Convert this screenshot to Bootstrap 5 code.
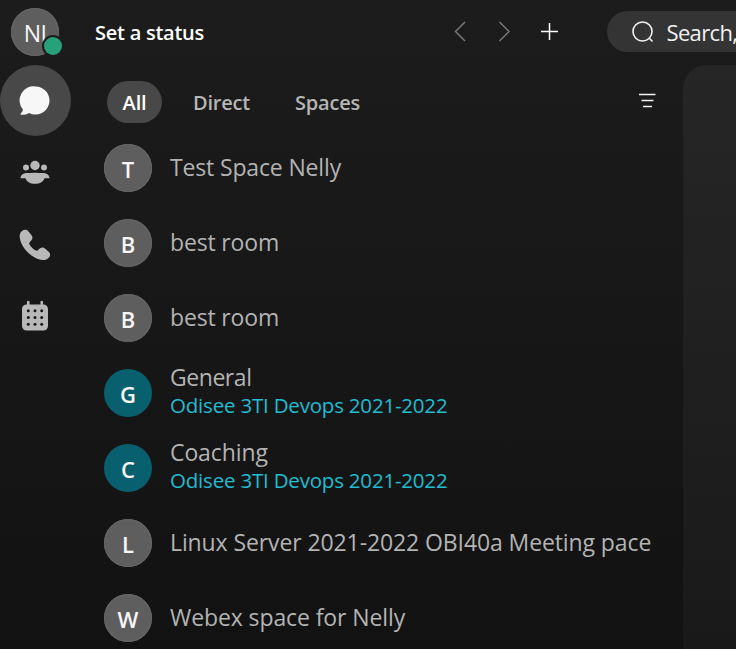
<!DOCTYPE html>
<html lang="en" data-bs-theme="dark">
<head>
<meta charset="utf-8">
<meta name="viewport" content="width=device-width, initial-scale=1">
<title>Messaging</title>
<link href="https://cdn.jsdelivr.net/npm/bootstrap@5.3.0/dist/css/bootstrap.min.css" rel="stylesheet">
<style>
body{width:736px;height:649px;font-family:"Open Sans","Noto Sans",sans-serif;background:linear-gradient(#1c1c1c,#121212);color:#b3b3b3;white-space:nowrap}
.topbar{height:66px;flex:none}
.topbar>*{flex:none}
.avatar{width:48px;height:48px;flex:none;background:#5e5e5e;color:#f7f7f7;box-shadow:inset 0 0 0 1px #666;font-size:22px;line-height:51px;font-weight:600;text-align:center}
.avatar.team{background:#08606e;box-shadow:none}
.me{margin:8px 0 0 11px;font-weight:500;line-height:50px;letter-spacing:-.6px;font-size:23px}
.presence{width:18px;height:18px;right:-3px;bottom:1px;background:#27a17a;box-shadow:0 0 0 2px #1c1c1c}
.status{margin:18px 0 0 36px;width:355px;font-size:20px;line-height:29px;font-weight:600;color:#fff;letter-spacing:-.25px}
.topbar .finder{margin:11px 0 0 -3px;width:129px;height:41px;background:#343434;color:#f2f2f2;font-size:22px;letter-spacing:-.65px;border-radius:21px 0 0 21px}
.search-label{padding-top:2px;margin-left:-.5px}
.rail{width:104px;flex:none;margin-top:-1px}
.rail a{width:71px;height:72px;color:#b8b8b8}
.rail a.active{background:#484848;color:#f7f7f7;height:71px}
.chats{width:579px;flex:none}
.tabs{height:73px;padding:15px 0 0 3px}
.tab{height:42px;line-height:44px;font-size:20px;font-weight:600;color:#b5b5b5;border-radius:21px;letter-spacing:-.2px}
.tab.active{background:#484848;color:#fff;width:55px;text-align:center}
.tab-direct{width:102px;margin-left:31px}
.tab-spaces{width:343px}
.room{height:75px;gap:18px;padding-top:5px}
.title{font-size:23px;line-height:30px;height:30px;letter-spacing:-.15px}
.long{letter-spacing:-.1px}
.two{margin-top:-7px}
.tight{letter-spacing:-.45px}
.sub{font-size:20.5px;line-height:26px;height:26px;color:#1fbdd2;letter-spacing:-.2px}
.pane{background:linear-gradient(#262626,#191919);border-radius:24px 0 0 0;margin-top:-1px}
</style>
</head>
<body class="overflow-hidden d-flex flex-column">
<header class="topbar d-flex align-items-start">
  <div class="avatar me rounded-circle position-relative">NI<span class="presence position-absolute rounded-circle"></span></div>
  <div class="status">Set a status</div>
  <svg width="160" height="64" fill="none" stroke="#777" stroke-width="1.5"><path d="M15 22 5.500 31.500 15 41M49.500 22 59 31.500 49.500 41"/><path d="M91 31.500h17M99.500 23v17" stroke="#fff"/></svg>
  <div class="finder d-flex align-items-center"><svg class="flex-shrink-0" width="60" height="41" fill="none" stroke="#f2f2f2" stroke-width="1.6"><circle cx="35.500" cy="20.500" r="9.500"/><path d="M42 27l3.500 3.500"/></svg><span class="search-label">Search,</span></div>
</header>
<main class="d-flex flex-grow-1">
  <nav class="rail d-flex flex-column" aria-label="Main">
    <a class="active rounded-circle" href="#" aria-label="Messages"><svg width="71" height="71" fill="currentColor"><path d="M35.500 21.500a14 14 0 1 1-6.500 26.400c-2.500 1.500-5 2-7.500 1.900-1 0-1.200-1-.6-1.600 1.300-1.200 2-2.300 2-3.700A14 14 0 0 1 35.500 21.500Z"/></svg></a>
    <a href="#" aria-label="Teams"><svg width="71" height="72" fill="currentColor"><circle cx="35" cy="29.500" r="4.700"/><circle cx="26" cy="31.500" r="3"/><circle cx="44" cy="31.500" r="3"/><path d="M27 37h3.500q4.500-.6 9 0H43c4 0 6.500 2.500 6.500 5.200H44.500c-1 3.500-4.500 5.500-9.500 5.500s-8.500-2-9.500-5.500H20.500c0-2.700 2.500-5.200 6.500-5.200Z"/></svg></a>
    <a href="#" aria-label="Calls"><svg width="71" height="72" fill="currentColor"><path transform="translate(0 .5)" d="M22 22.500c2-1.700 4.700-1.700 6.300.2l3.200 4c1.400 1.800 1.200 3.800-.3 5.400l-1.300 1.500c-.8 1-.8 1.700-.1 2.800 1.400 2.200 3.200 4 5.600 5.400 1 .6 1.900.5 2.700-.3l1.600-1.400c1.700-1.500 3.700-1.600 5.300-.2l3.700 3.300c1.900 1.700 1.900 4.200.1 6-2.600 2.700-6.700 2.900-11 1.200-8-3.200-14.500-9.900-17.300-17.900-1.400-4.200-1.200-7.800 1.500-10Z"/></svg></a>
    <a href="#" aria-label="Meetings"><svg width="71" height="72"><path fill="currentColor" d="M27 21h2.500v3.500h11V21H43v3.500h.5a4.500 4.500 0 0 1 4.500 4.500v17a4.500 4.500 0 0 1-4.500 4.500h-17A4.500 4.500 0 0 1 22 46V29a4.500 4.500 0 0 1 4.500-4.500h.5Z"/><g fill="#191919"><circle cx="28.300" cy="30.800" r="1.500"/><circle cx="35" cy="30.800" r="1.500"/><circle cx="41.700" cy="30.800" r="1.500"/><circle cx="28.300" cy="37.500" r="1.500"/><circle cx="35" cy="37.500" r="1.500"/><circle cx="41.700" cy="37.500" r="1.500"/><circle cx="28.300" cy="44.200" r="1.500"/><circle cx="35" cy="44.200" r="1.500"/><circle cx="41.700" cy="44.200" r="1.500"/></g></svg></a>
  </nav>
  <section class="chats">
    <div class="tabs d-flex">
      <div class="tab active">All</div>
      <div class="tab tab-direct">Direct</div>
      <div class="tab tab-spaces">Spaces</div>
      <svg width="18" height="43" stroke="#f2f2f2" stroke-width="1.500"><path d="M1 13.500h16.500M3.500 19.500h12M5 25.500h9"/></svg>
    </div>
    <div class="room d-flex"><div class="avatar rounded-circle">T</div><div class="pt-2"><div class="title">Test Space Nelly</div></div></div>
    <div class="room d-flex"><div class="avatar rounded-circle">B</div><div class="pt-2"><div class="title">best room</div></div></div>
    <div class="room d-flex"><div class="avatar rounded-circle">B</div><div class="pt-2"><div class="title">best room</div></div></div>
    <div class="room d-flex"><div class="avatar team rounded-circle">G</div><div class="two"><div class="title tight">General</div><div class="sub">Odisee 3TI Devops 2021-2022</div></div></div>
    <div class="room d-flex"><div class="avatar team rounded-circle">C</div><div class="two"><div class="title long">Coaching</div><div class="sub">Odisee 3TI Devops 2021-2022</div></div></div>
    <div class="room d-flex"><div class="avatar rounded-circle">L</div><div class="pt-2"><div class="title long">Linux Server 2021-2022 OBI40a Meeting pace</div></div></div>
    <div class="room d-flex"><div class="avatar rounded-circle">W</div><div class="pt-2"><div class="title long">Webex space for Nelly</div></div></div>
  </section>
  <aside class="pane flex-grow-1"></aside>
</main>
<script src="https://cdn.jsdelivr.net/npm/bootstrap@5.3.0/dist/js/bootstrap.bundle.min.js"></script>
</body>
</html>
